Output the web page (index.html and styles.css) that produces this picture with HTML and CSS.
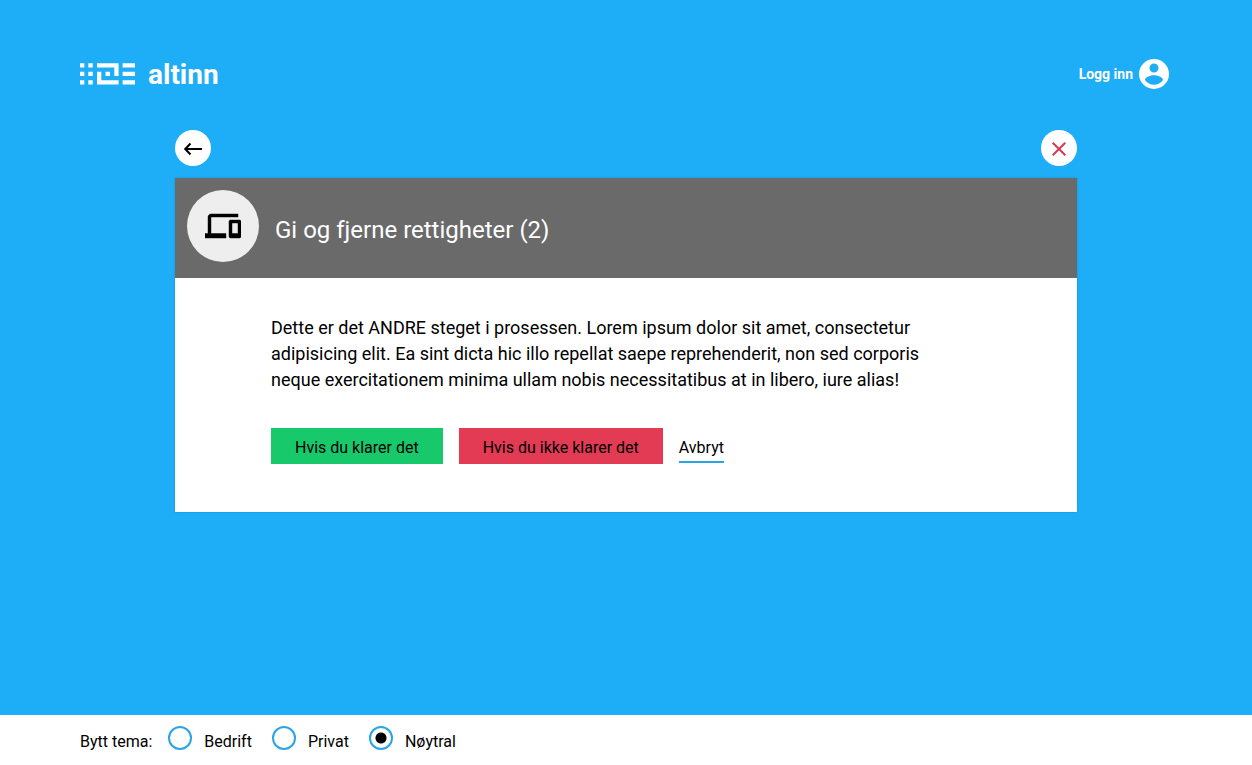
FILE: index.html
```html
<!DOCTYPE html>
<html lang="nb">
<head>
<meta charset="utf-8">
<meta name="viewport" content="width=device-width, initial-scale=1">
<title>Gi og fjerne rettigheter - Altinn</title>
<link rel="stylesheet" href="styles.css">
</head>
<body>
<header class="site-header">
  <a class="logo" href="#">
    <svg class="logo-mark" viewBox="0 0 56 22" aria-hidden="true">
      <path d="M0 .3h4.300v4.200H0zM0 8.800h4.300V13H0zM0 17.300h4.300v4.200H0zM8.300.3h4.400v4.200H8.300zM8.300 8.800h4.400V13H8.300zM8.300 17.300h4.400v4.200H8.300zM17 .3h21.600V13h-4.300V4.500H17zM17 8.800h4.300v8.500h17.300v4.200H17zM25.500 8.800H30V13h-4.500zM42.600.3H55v4.200H42.600zM42.600 8.800H55V13H42.600zM42.600 17.300H55v4.200H42.600z"/>
    </svg>
    <span class="logo-text">altinn</span>
  </a>
  <a class="login" href="#">
    <span>Logg inn</span>
    <svg class="login-icon" viewBox="2 2 20 20" aria-hidden="true">
      <path d="M12 2a10 10 0 1 0 0 20 10 10 0 0 0 0-20zm0 3a3 3 0 1 1 0 6 3 3 0 0 1 0-6zm0 14.200a7.200 7.200 0 0 1-6-3.220c.03-1.990 4-3.080 6-3.080s5.970 1.090 6 3.080a7.200 7.200 0 0 1-6 3.220z"/>
    </svg>
  </a>
</header>
<main class="content">
  <div class="toolbar">
    <button class="round-button" type="button" aria-label="Tilbake">
      <svg class="round-icon" viewBox="0 0 36 36" aria-hidden="true"><path d="M27 19H10.500M15.500 13.500L10.200 19l5.300 5.500"/></svg>
    </button>
    <button class="round-button round-button-close" type="button" aria-label="Lukk">
      <svg class="round-icon" viewBox="0 0 36 36" aria-hidden="true"><path d="M11.700 12.700l12.600 12.600M24.300 12.700L11.700 25.300"/></svg>
    </button>
  </div>
  <section class="card">
    <div class="card-header">
      <span class="card-icon">
        <svg class="devices-icon" viewBox="0 0 24 24" aria-hidden="true"><path d="M4 6h18V4H4c-1.100 0-2 .9-2 2v11H0v3h14v-3H4V6zm19 2h-6c-.55 0-1 .45-1 1v10c0 .55.450 1 1 1h6c.550 0 1-.450 1-1V9c0-.55-.45-1-1-1zm-1 9h-4v-7h4v7z"/></svg>
      </span>
      <h1 class="card-title">Gi og fjerne rettigheter (2)</h1>
    </div>
    <div class="card-body">
      <p class="lead">Dette er det ANDRE steget i prosessen. Lorem ipsum dolor sit amet, consectetur adipisicing elit. Ea sint dicta hic illo repellat saepe reprehenderit, non sed corporis neque exercitationem minima ullam nobis necessitatibus at in libero, iure alias!</p>
      <div class="actions">
        <button class="button button-success" type="button">Hvis du klarer det</button>
        <button class="button button-danger" type="button">Hvis du ikke klarer det</button>
        <a class="cancel" href="#">Avbryt</a>
      </div>
    </div>
  </section>
</main>
<footer class="theme-bar">
  <fieldset class="theme-options">
    <legend class="theme-legend">Bytt tema:</legend>
    <label class="option"><input class="radio" type="radio" name="theme"><span>Bedrift</span></label>
    <label class="option"><input class="radio" type="radio" name="theme"><span>Privat</span></label>
    <label class="option"><input class="radio" type="radio" name="theme" checked><span>Nøytral</span></label>
  </fieldset>
</footer>
</body>
</html>
```

FILE: styles.css
```css
*, *::before, *::after { box-sizing: border-box; }

body {
  margin: 0;
  min-height: 100vh;
  display: flex;
  flex-direction: column;
  background: #1eaef7;
  color: #000;
  font: 16px/24px Roboto, sans-serif;
}

.site-header {
  display: flex;
  justify-content: space-between;
  align-items: center;
  padding: 58px 83px 0 80px;
}

.logo { display: flex; align-items: center; gap: 12px; color: #fff; text-decoration: none; }
.logo-mark { width: 56px; height: 22px; fill: currentColor; }
.logo-text { padding-top: 2px; font-size: 28px; line-height: 30px; font-weight: 700; }

.login {
  display: flex;
  align-items: center;
  gap: 6px;
  color: #fff;
  font-size: 14px;
  font-weight: 700;
  text-decoration: none;
}
.login-icon { width: 30px; height: 30px; fill: currentColor; }

.content { flex: 1; width: 100%; max-width: 950px; margin: 0 auto; padding: 40px 24px; }
.toolbar { display: flex; justify-content: space-between; margin-bottom: 12px; }

.round-button {
  width: 36px;
  height: 36px;
  padding: 0;
  border: 0;
  border-radius: 50%;
  background: #fff;
  color: #000;
  cursor: pointer;
}
.round-button-close { color: #d63b54; }
.round-icon { display: block; fill: none; stroke: currentColor; stroke-width: 2; }

.card { background: #fff; box-shadow: 0 0 2px rgba(0, 0, 0, 0.2); }
.card-header {
  display: flex;
  align-items: flex-start;
  gap: 16px;
  padding: 12px 12px 16px;
  background: #6a6a6a;
}
.card-icon {
  flex: none;
  display: grid;
  place-items: center;
  width: 72px;
  height: 72px;
  border-radius: 50%;
  background: #eee;
}
.devices-icon { width: 36px; height: 36px; stroke: #000; stroke-width: 0.3; }
.card-title {
  margin: 0;
  padding-top: 24px;
  color: #fff;
  font-size: 24px;
  line-height: 32px;
  font-weight: 400;
}

.card-body { padding: 37px 96px 48px; }
.lead { max-width: 684px; margin: 0 0 35px; font-size: 18px; line-height: 26px; }

.actions { display: flex; flex-wrap: wrap; align-items: center; gap: 16px; }
.button {
  height: 36px;
  padding: 4px 24px 0;
  border: 0;
  font: inherit;
  color: #000;
  cursor: pointer;
}
.button-success { background: #17c96b; }
.button-danger { background: #e23b53; }
.cancel { margin-top: 4px; padding: 2px 0 1px; border-bottom: 2px solid #27a5e6; color: #000; text-decoration: none; }

.theme-bar { padding: 7px 80px 11px; background: #fff; }
.theme-options { display: flex; align-items: center; margin: 0; padding: 0; border: 0; }
.theme-legend { float: left; padding: 8px 16px 0 0; }
.option { display: flex; align-items: center; gap: 12px; height: 32px; margin-right: 20px; cursor: pointer; }
.option span { padding-top: 8px; }
.radio {
  appearance: none;
  width: 24px;
  height: 24px;
  margin: 0;
  border: 2px solid #27a5e6;
  border-radius: 50%;
  background: #fff;
}
.radio:checked { background: radial-gradient(circle, #000 5px, #fff 6px); }
```
